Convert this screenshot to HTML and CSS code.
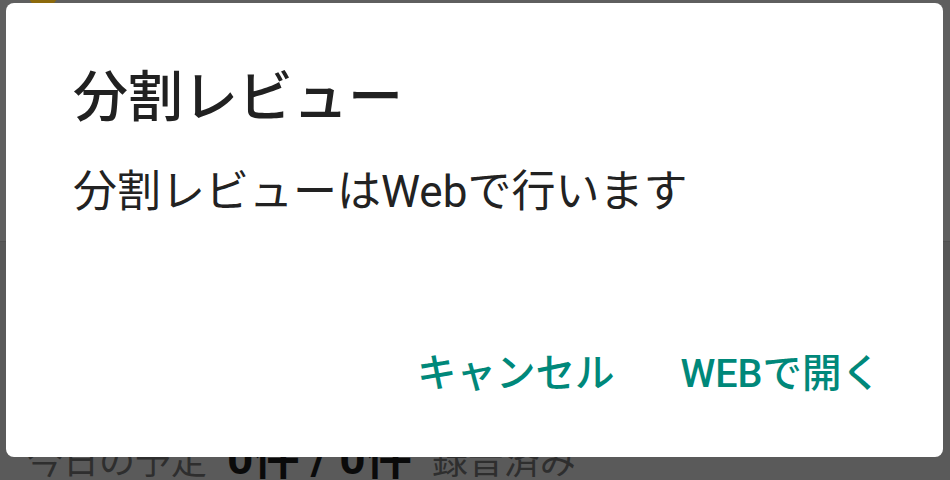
FILE: index.html
```html
<!DOCTYPE html>
<html lang="ja">
<head>
<meta charset="utf-8">
<title>分割レビュー</title>
<link rel="stylesheet" href="styles.css">
</head>
<body>
<div class="screen">
  <div class="page">
    <div class="page-top">
      <span class="app-icon"></span>
    </div>
    <div class="page-band"></div>
    <div class="page-bottom">
      <div class="summary">
        <span class="summary-label">今日の予定</span>
        <span class="summary-count">0件 / 0件</span>
        <span class="summary-label">録音済み</span>
      </div>
    </div>
  </div>
  <div class="dialog">
    <h1 class="dialog-title">分割レビュー</h1>
    <p class="dialog-message">分割レビューはWebで行います</p>
    <div class="dialog-actions">
      <button class="dialog-button">キャンセル</button>
      <button class="dialog-button">WEBで開く</button>
    </div>
  </div>
</div>
</body>
</html>
```

FILE: styles.css
```css
* { box-sizing: border-box; }

html, body {
  margin: 0;
  padding: 0;
}

body {
  font-family: Roboto, "Noto Sans CJK JP", "Noto Sans", sans-serif;
  background: #5a5a5a;
}

.screen {
  position: relative;
  width: 950px;
  height: 480px;
  overflow: hidden;
}

.page {
  display: flex;
  flex-direction: column;
  height: 480px;
}

.page-top {
  flex: 0 0 241px;
  background: #5f5f5f;
  position: relative;
}

.app-icon {
  position: absolute;
  left: 28px;
  top: -22px;
  width: 30px;
  height: 30px;
  border-radius: 50%;
  background: #8c6a0c;
}

.page-band {
  flex: 0 0 29px;
  background: #575757;
  border-top: 1px solid #505050;
}

.page-bottom {
  flex: 1 1 auto;
  min-height: 0;
  overflow: hidden;
  background: #5a5a5a;
  padding-left: 27px;
  padding-top: 151px;
}

.summary {
  display: flex;
  align-items: baseline;
  gap: 20px;
  white-space: nowrap;
}

.summary-label {
  font-size: 36px;
  color: #2e2e2e;
}

.summary-count {
  font-size: 46px;
  font-weight: 700;
  color: #0a0a0a;
}

.dialog {
  position: absolute;
  left: 6px;
  top: 3px;
  width: 937px;
  height: 454px;
  background: #ffffff;
  border-radius: 8px;
  padding: 62px 62px 0 67px;
  display: flex;
  flex-direction: column;
}

.dialog-title {
  margin: 0;
  font-size: 55px;
  line-height: 65px;
  font-weight: 500;
  color: #212121;
}

.dialog-message {
  margin: 32px 0 0 0;
  font-size: 44px;
  line-height: 60px;
  font-weight: 400;
  color: #222222;
}

.dialog-actions {
  display: flex;
  justify-content: flex-end;
  gap: 66px;
  margin-top: 127px;
}

.dialog-button {
  border: none;
  background: transparent;
  padding: 0;
  font-family: Roboto, "Noto Sans CJK JP", "Noto Sans", sans-serif;
  font-size: 39.5px;
  line-height: 50px;
  font-weight: 500;
  color: #00887a;
}
```
